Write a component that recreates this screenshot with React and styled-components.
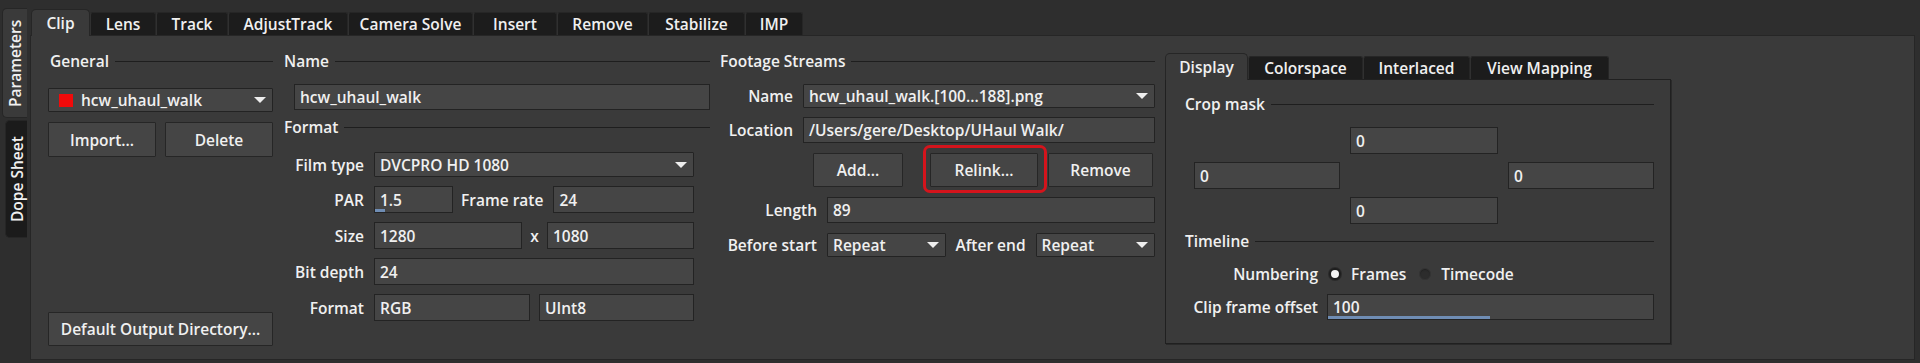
import React from "react";
import styled, { createGlobalStyle } from "styled-components";

const GlobalStyle = createGlobalStyle`
  html, body {
    margin: 0;
    padding: 0;
    background: #2e2e2e;
  }
  body {
    font-family: "Open Sans", "Noto Sans", sans-serif;
    font-size: 15.5px;
    font-weight: 600;
    color: #f0f0f0;
  }
  * {
    box-sizing: border-box;
  }
`;

const MAIN_TABS = [
  { label: "Clip", w: 59, active: true },
  { label: "Lens", w: 66 },
  { label: "Track", w: 72 },
  { label: "AdjustTrack", w: 120 },
  { label: "Camera Solve", w: 125 },
  { label: "Insert", w: 84 },
  { label: "Remove", w: 91 },
  { label: "Stabilize", w: 97 },
  { label: "IMP", w: 58 },
];

const SUB_TABS = [
  { label: "Display", w: 83, active: true },
  { label: "Colorspace", w: 115 },
  { label: "Interlaced", w: 107 },
  { label: "View Mapping", w: 139 },
];

const Window = styled.div`
  display: flex;
  width: 1920px;
  height: 363px;
  overflow: hidden;
`;

const SideBar = styled.div`
  width: 30px;
  padding-top: 8px;
  display: flex;
  flex-direction: column;
  align-items: flex-end;
  gap: 2px;
`;

const SideTab = styled.div`
  writing-mode: vertical-rl;
  transform: rotate(180deg);
  width: ${(p) => (p.$active ? 25 : 22)}px;
  height: ${(p) => p.$h}px;
  margin-right: 3px;
  display: flex;
  align-items: center;
  justify-content: center;
  background: ${(p) => (p.$active ? "#3a3a3a" : "#1b1b1b")};
  border-radius: 0 5px 5px 0;
  border: 1px solid #262626;
  border-left: none;
`;

const Main = styled.div`
  flex: 1;
  display: flex;
  flex-direction: column;
  padding: 8px 5px 3px 0;
`;

const TabBar = styled.div`
  display: flex;
  align-items: flex-end;
  height: 27px;
  padding-left: 1px;
`;

const Tab = styled.div`
  width: ${(p) => p.$w}px;
  height: ${(p) => (p.$active ? 27 : 23)}px;
  display: flex;
  align-items: center;
  justify-content: center;
  background: ${(p) => (p.$active ? "#3a3a3a" : "#1c1c1c")};
  border: 1px solid #262626;
  border-bottom: none;
  border-left-color: ${(p) => (p.$active ? "#262626" : "#303030")};
  border-radius: ${(p) => (p.$active ? "5px 5px 0 0" : "3px 3px 0 0")};
  position: relative;
  z-index: ${(p) => (p.$active ? 1 : 0)};
  margin-bottom: ${(p) => (p.$active ? -1 : 0)}px;
  white-space: nowrap;
`;

const Panel = styled.div`
  flex: 1;
  display: flex;
  background: #3a3a3a;
  border: 1px solid #262626;
  padding: 16px 0 13px 17px;
`;

const Column = styled.div`
  display: flex;
  flex-direction: column;
  width: ${(p) => p.$w}px;
  margin-left: ${(p) => p.$ml || 0}px;

  & > * {
    flex-shrink: 0;
  }
`;

const GroupHeader = styled.div`
  display: flex;
  align-items: center;
  height: 18px;
  padding-left: 2px;
  margin-top: ${(p) => p.$mt || 0}px;
  white-space: nowrap;

  &::after {
    content: "";
    flex: 1;
    height: 1px;
    margin-left: 6px;
    background: #1e1e1e;
  }
`;

const Field = styled.div`
  position: relative;
  display: flex;
  align-items: center;
  height: ${(p) => p.$h || 27}px;
  ${(p) =>
    p.$w ? `width: ${p.$w}px; flex: none;` : p.$fill ? "flex: 1 1 0; min-width: 0;" : ""}
  margin-left: ${(p) => p.$ml || 0}px;
  margin-top: ${(p) => p.$mt || 0}px;
  padding: 0 5px;
  background: #454545;
  border: 1px solid #232323;
  white-space: nowrap;
  overflow: hidden;

  &::after {
    content: "";
    display: ${(p) => (p.$bar ? "block" : "none")};
    position: absolute;
    left: 0;
    bottom: 0;
    width: ${(p) => p.$bar || 0}px;
    height: 3px;
    background: #6f8db4;
  }
`;

const Select = styled(Field)`
  padding: 0 6px 0 ${(p) => (p.$swatch ? 10 : 5)}px;
  gap: 8px;
  border-radius: 1px;
`;

const Arrow = styled.span`
  margin-left: auto;
  width: 0;
  height: 0;
  border-left: 6px solid transparent;
  border-right: 6px solid transparent;
  border-top: 6px solid #eeeeee;
`;

const Swatch = styled.span`
  width: 14px;
  height: 13px;
  background: #f20a0a;
`;

const Button = styled.div`
  display: flex;
  align-items: center;
  justify-content: center;
  width: ${(p) => p.$w}px;
  height: ${(p) => p.$h || 34}px;
  margin-left: ${(p) => p.$ml || 0}px;
  background: #454545;
  border: 1px solid #262626;
  border-radius: 1px;
  white-space: nowrap;
`;

const ButtonRow = styled.div`
  display: flex;
  margin-top: ${(p) => p.$mt || 0}px;
  padding-left: ${(p) => p.$pl || 0}px;
`;

const Highlight = styled.div`
  position: relative;
  margin-left: ${(p) => p.$ml}px;

  &::after {
    content: "";
    position: absolute;
    top: -8px;
    left: -7px;
    right: -9px;
    bottom: -6px;
    border: 3px solid #d4141c;
    border-radius: 7px;
    pointer-events: none;
  }
`;

const FormGrid = styled.div`
  display: grid;
  grid-template-columns: ${(p) => p.$label}px 1fr;
  column-gap: ${(p) => p.$gap || 10}px;
  row-gap: ${(p) => p.$rowGap || 9}px;
  margin-top: ${(p) => p.$mt || 0}px;
  margin-right: ${(p) => p.$mr || 0}px;
  padding-left: ${(p) => p.$pl || 0}px;
`;

const Label = styled.div`
  text-align: right;
  align-self: center;
  white-space: nowrap;
`;

const FieldRow = styled.div`
  display: flex;
  align-items: center;
  height: ${(p) => p.$h || 27}px;
`;

const InlineLabel = styled.span`
  margin: 0 ${(p) => p.$r ?? 10}px 0 ${(p) => p.$l ?? 8}px;
  width: ${(p) => (p.$w ? `${p.$w}px` : "auto")};
  text-align: center;
  white-space: nowrap;
`;

const SubTabBar = styled.div`
  display: flex;
  align-items: flex-end;
  height: 27px;
`;

const Frame = styled.div`
  height: 265px;
  border: 1px solid #202020;
  box-shadow: 1px 1px 0 #2a2a2a;
  padding: 15px 16px 0 17px;
  display: flex;
  flex-direction: column;
`;

const CropGrid = styled.div`
  display: grid;
  grid-template-columns: 146px 148px 146px;
  grid-template-rows: repeat(3, 27px);
  column-gap: 10px;
  row-gap: 8px;
  margin-top: 14px;
  padding-left: 11px;
`;

const CropCell = styled(Field)`
  grid-column: ${(p) => p.$col};
  grid-row: ${(p) => p.$row};
  height: 27px;
`;

const Radio = styled.span`
  width: 12px;
  height: 12px;
  border-radius: 50%;
  margin: 0 10px 0 ${(p) => p.$ml || 0}px;
  background: ${(p) => (p.$on ? "#f4f4f4" : "#2c2c2c")};
  border: ${(p) => (p.$on ? "2px solid #1e1e1e" : "1px solid #333")};
  box-shadow: ${(p) => (p.$on ? "0 0 0 1px #2a2a2a" : "inset 0 1px 1px #222")};
`;

const GeneralColumn = () => (
  <Column $w={225}>
    <GroupHeader>General</GroupHeader>
    <Select $h={24} $mt={18} $swatch>
      <Swatch />
      hcw_uhaul_walk
      <Arrow />
    </Select>
    <ButtonRow $mt={10}>
      <Button $w={108} $h={35}>Import...</Button>
      <Button $w={108} $h={35} $ml={9}>Delete</Button>
    </ButtonRow>
    <Button $w={225} $h={34} style={{ marginTop: "auto" }}>
      Default Output Directory...
    </Button>
  </Column>
);

const NameColumn = () => (
  <Column $w={428} $ml={9}>
    <GroupHeader>Name</GroupHeader>
    <Field $h={26} $mt={14} $ml={12}>hcw_uhaul_walk</Field>
    <GroupHeader $mt={8}>Format</GroupHeader>
    <FormGrid $label={82} $mt={16} $mr={16}>
      <Label>Film type</Label>
      <Select $h={25}>
        DVCPRO HD 1080
        <Arrow />
      </Select>

      <Label>PAR</Label>
      <FieldRow>
        <Field $w={79} $bar={10}>1.5</Field>
        <InlineLabel>Frame rate</InlineLabel>
        <Field $fill>24</Field>
      </FieldRow>

      <Label>Size</Label>
      <FieldRow>
        <Field $w={148}>1280</Field>
        <InlineLabel $l={0} $r={0} $w={25}>x</InlineLabel>
        <Field $fill>1080</Field>
      </FieldRow>

      <Label>Bit depth</Label>
      <FieldRow>
        <Field $fill>24</Field>
      </FieldRow>

      <Label>Format</Label>
      <FieldRow>
        <Field $w={156}>RGB</Field>
        <Field $fill $ml={9}>UInt8</Field>
      </FieldRow>
    </FormGrid>
  </Column>
);

const FootageColumn = () => (
  <Column $w={437} $ml={8}>
    <GroupHeader>Footage Streams</GroupHeader>
    <FormGrid $label={75} $mt={14}>
      <Label>Name</Label>
      <Select $h={24}>
        hcw_uhaul_walk.[100...188].png
        <Arrow />
      </Select>
      <Label>Location</Label>
      <Field $h={26}>/Users/gere/Desktop/UHaul Walk/</Field>
    </FormGrid>
    <ButtonRow $mt={10} $pl={95}>
      <Button $w={90}>Add...</Button>
      <Highlight $ml={27}>
        <Button $w={108}>Relink...</Button>
      </Highlight>
      <Button $w={105} $ml={10}>Remove</Button>
    </ButtonRow>
    <FormGrid $label={99} $mt={10} $rowGap={10}>
      <Label>Length</Label>
      <Field $h={26}>89</Field>
      <Label>Before start</Label>
      <FieldRow $h={24}>
        <Select $h={24} $fill>
          Repeat
          <Arrow />
        </Select>
        <InlineLabel $l={9} $r={10}>After end</InlineLabel>
        <Select $h={24} $fill>
          Repeat
          <Arrow />
        </Select>
      </FieldRow>
    </FormGrid>
  </Column>
);

const DisplayColumn = () => (
  <Column $w={506} $ml={10}>
    <SubTabBar>
      {SUB_TABS.map((t) => (
        <Tab key={t.label} $w={t.w} $active={t.active}>
          {t.label}
        </Tab>
      ))}
    </SubTabBar>
    <Frame>
      <GroupHeader>Crop mask</GroupHeader>
      <CropGrid>
        <CropCell $col={2} $row={1}>0</CropCell>
        <CropCell $col={1} $row={2}>0</CropCell>
        <CropCell $col={3} $row={2}>0</CropCell>
        <CropCell $col={2} $row={3}>0</CropCell>
      </CropGrid>
      <GroupHeader $mt={8}>Timeline</GroupHeader>
      <FormGrid $label={135} $gap={9} $rowGap={8} $mt={12}>
        <Label>Numbering</Label>
        <FieldRow $h={24}>
          <Radio $on $ml={2} />
          Frames
          <Radio $ml={13} />
          Timecode
        </FieldRow>
        <Label>Clip frame offset</Label>
        <Field $h={26} $bar={162}>100</Field>
      </FormGrid>
    </Frame>
  </Column>
);

export default function App() {
  return (
    <>
      <GlobalStyle />
      <Window>
        <SideBar>
          <SideTab $active $h={110}>Parameters</SideTab>
          <SideTab $h={118}>Dope Sheet</SideTab>
        </SideBar>
        <Main>
          <TabBar>
            {MAIN_TABS.map((t) => (
              <Tab key={t.label} $w={t.w} $active={t.active}>
                {t.label}
              </Tab>
            ))}
          </TabBar>
          <Panel>
            <GeneralColumn />
            <NameColumn />
            <FootageColumn />
            <DisplayColumn />
          </Panel>
        </Main>
      </Window>
    </>
  );
}
